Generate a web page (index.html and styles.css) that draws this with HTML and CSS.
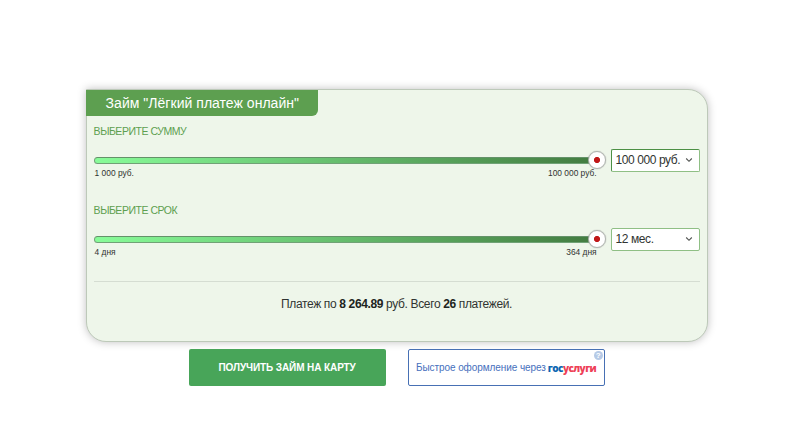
FILE: index.html
```html
<!DOCTYPE html>
<html lang="ru">
<head>
<meta charset="utf-8">
<title>Займ "Лёгкий платеж онлайн"</title>
<link rel="stylesheet" href="styles.css">
</head>
<body>
<main class="calculator">
  <section class="card">
    <h1 class="card-title">Займ "Лёгкий платеж онлайн"</h1>
    <div class="field">
      <div class="label">ВЫБЕРИТЕ СУММУ</div>
      <div class="row">
        <div class="slider">
          <div class="track"><span class="handle"></span></div>
          <div class="limits"><span>1 000 руб.</span><span>100 000 руб.</span></div>
        </div>
        <div class="select select-sum"><span>100 000 руб.</span><svg class="chevron" viewBox="0 0 8 6"><path d="M1.2 1.5 4 4.3 6.8 1.5"/></svg></div>
      </div>
    </div>
    <div class="field">
      <div class="label">ВЫБЕРИТЕ СРОК</div>
      <div class="row">
        <div class="slider">
          <div class="track"><span class="handle"></span></div>
          <div class="limits"><span>4 дня</span><span>364 дня</span></div>
        </div>
        <div class="select"><span>12 мес.</span><svg class="chevron" viewBox="0 0 8 6"><path d="M1.2 1.5 4 4.3 6.8 1.5"/></svg></div>
      </div>
    </div>
    <p class="summary">Платеж по <b>8 264.89</b> руб. Всего <b>26</b> платежей.</p>
  </section>
  <div class="actions">
    <a class="button primary">ПОЛУЧИТЬ ЗАЙМ НА КАРТУ</a>
    <a class="button express"><span class="express-text">Быстрое оформление через</span><span class="gos"><span class="gos-blue">гос</span><span class="gos-red">услуги</span></span><span class="help">?</span></a>
  </div>
</main>
</body>
</html>
```

FILE: styles.css
```css
* { box-sizing: border-box; }
body {
  margin: 0;
  height: 444px;
  overflow: hidden;
  background: #fff;
  font-family: "Liberation Sans", Arial, sans-serif;
  color: #303431;
}
.calculator { width: 622px; margin-left: 85.6px; padding-top: 89px; }
.card {
  height: 253px;
  padding: 0 7px;
  border: 1px solid #bdc9b9;
  border-radius: 0 20px 20px 20px;
  background: #eef6ea;
  box-shadow: 0 0 8px rgba(0, 0, 0, .25);
}
.card-title {
  width: 232px;
  height: 26px;
  margin: 0 0 0 -8px;
  padding-left: 20px;
  border-radius: 0 0 6px 0;
  background: #5d9f50;
  color: #fff;
  font-size: 14px;
  font-weight: 400;
  line-height: 26px;
  letter-spacing: .03px;
  white-space: nowrap;
}
.field { height: 79px; padding-top: 7px; }
.label { height: 17px; font-size: 10.5px; line-height: 16px; letter-spacing: -.47px; color: #5d9f50; }
.row { display: flex; justify-content: space-between; padding-top: 9px; }
.slider { width: 503px; padding-top: 8px; }
.track {
  position: relative;
  height: 7px;
  border: 1px solid #70a276;
  border-top-color: #649269;
  border-radius: 4px;
  background: linear-gradient(90deg, #88fc99, #427b40);
}
.handle {
  position: absolute;
  right: -10px;
  top: -7px;
  width: 18px;
  height: 18px;
  border: 1px solid #aeb2ae;
  border-radius: 50%;
  background: radial-gradient(circle, #c01818 0 2.7px, #fff 3.5px);
  box-shadow: 0 0 1px #888;
}
.limits {
  display: flex;
  justify-content: space-between;
  padding: 3px 0 0 1px;
  font-size: 8.4px;
  line-height: 12px;
}
.select {
  display: flex;
  align-items: center;
  justify-content: space-between;
  width: 89px;
  height: 23px;
  padding: 0 6px 1px 4px;
  border: 1px solid #8fbf85;
  border-radius: 2px;
  background: #fff;
  font-size: 12px;
  letter-spacing: -.42px;
  white-space: nowrap;
}
.select-sum { border-top-color: #4c9045; border-left-color: #4c9045; }
.chevron { flex: none; width: 8px; height: 6px; fill: none; stroke: #505350; stroke-width: 1.1; }
.summary {
  height: 46px;
  margin: 7px 0 0;
  border-top: 1px solid #d5ddd2;
  font-size: 12px;
  line-height: 45px;
  letter-spacing: -.36px;
  text-align: center;
}
.summary b { color: #202421; }
.actions { display: flex; justify-content: center; gap: 22px; padding-top: 7px; }
.button {
  display: flex;
  align-items: center;
  justify-content: center;
  width: 197px;
  height: 37px;
  border-radius: 2px;
  white-space: nowrap;
}
.primary { background: #48a559; color: #fff; font-size: 10px; font-weight: 700; letter-spacing: -.1px; }
.express {
  position: relative;
  gap: 2px;
  border: 1px solid #4770b4;
  background: #fff;
  color: #4770bd;
  font-size: 10px;
  letter-spacing: -.08px;
}
.gos { font-family: "Open Sans", sans-serif; font-weight: 800; font-size: 10px; letter-spacing: -.55px; }
.gos-blue { color: #0d67b2; }
.gos-red { color: #ee4056; }
.help {
  position: absolute;
  right: 1px;
  top: 1px;
  width: 9px;
  height: 9px;
  border-radius: 50%;
  background: #b6cae6;
  color: #fff;
  font-size: 8px;
  font-weight: 700;
  line-height: 9px;
  text-align: center;
}
```
